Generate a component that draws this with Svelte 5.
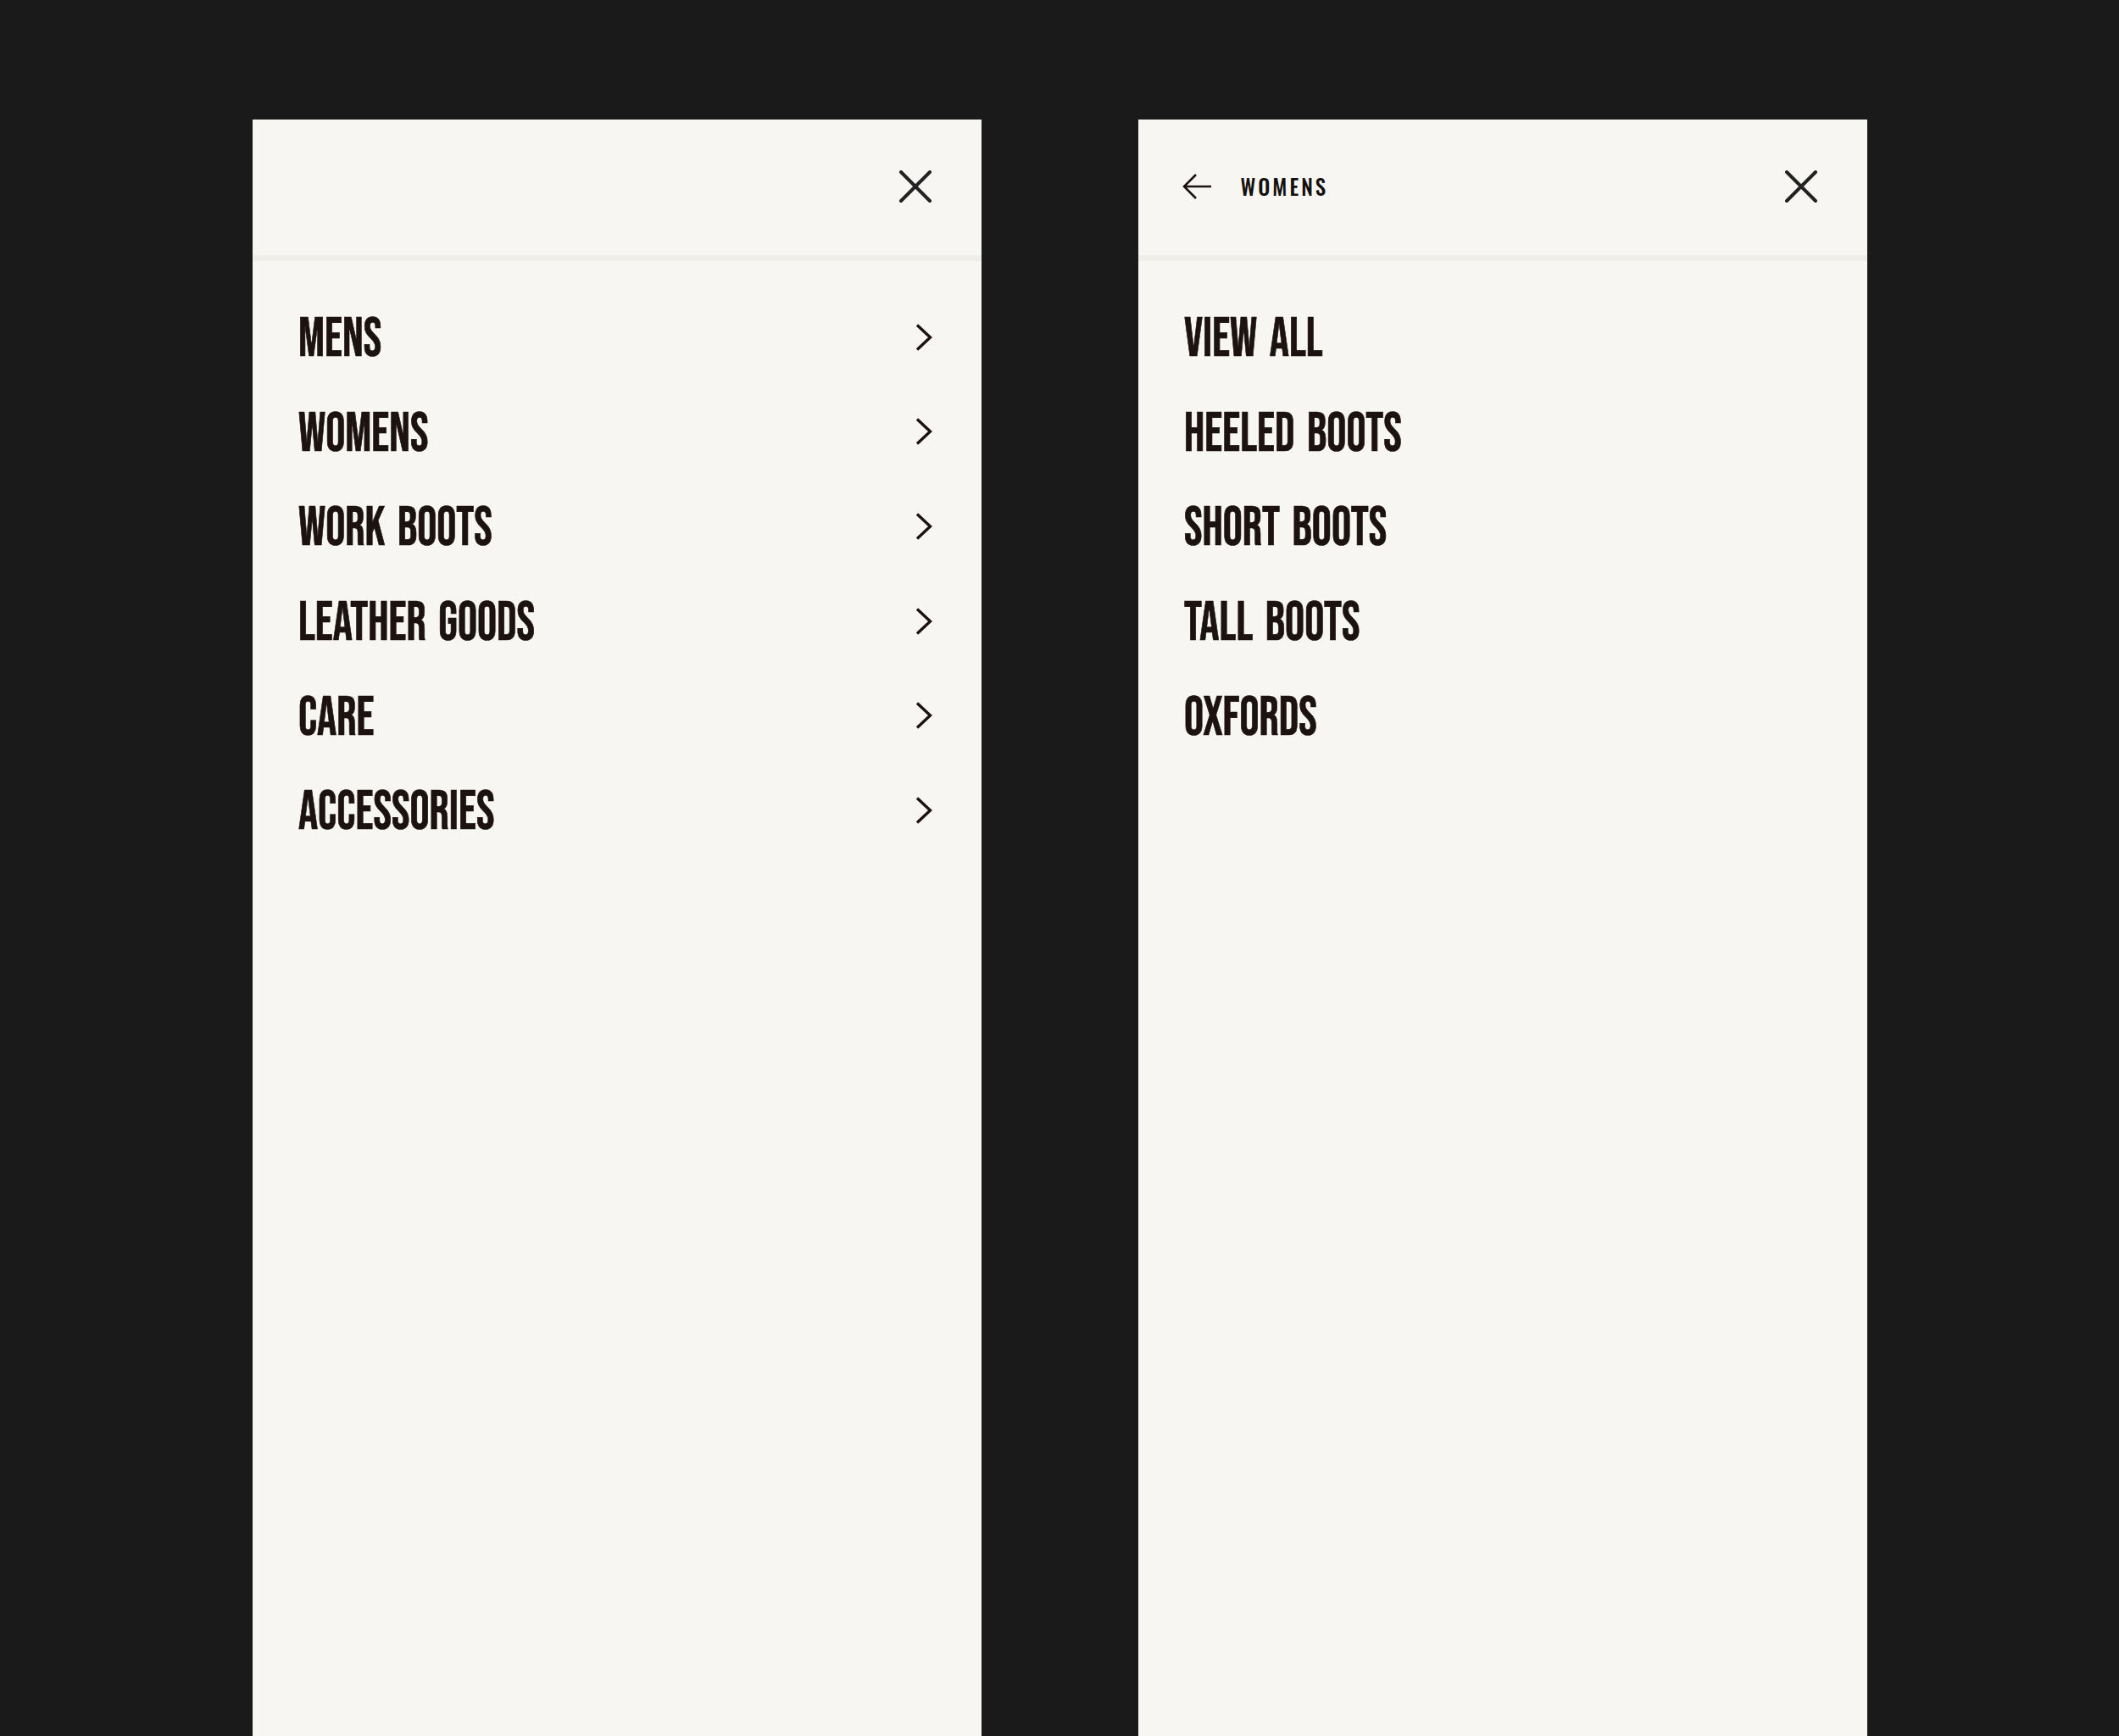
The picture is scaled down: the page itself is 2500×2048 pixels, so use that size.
<script>
  const main = ['MENS', 'WOMENS', 'WORK BOOTS', 'LEATHER GOODS', 'CARE', 'ACCESSORIES'];
  const sub = ['VIEW ALL', 'HEELED BOOTS', 'SHORT BOOTS', 'TALL BOOTS', 'OXFORDS'];
</script>

{#snippet close()}
  <svg class="close" viewBox="0 0 38 38" aria-hidden="true">
    <path d="M2 2 36 36M36 2 2 36" />
  </svg>
{/snippet}

<div class="stage">
  <section class="panel">
    <header class="head">
      {@render close()}
    </header>
    <ul class="list">
      {#each main as item}
        <li class="row">
          <span class="label">{item}</span>
          <svg class="chev" viewBox="0 0 20 32" aria-hidden="true"><path d="M2 1.5 17.5 16 2 30.5" /></svg>
        </li>
      {/each}
    </ul>
  </section>

  <section class="panel">
    <header class="head">
      <svg class="back" viewBox="0 0 34 30" aria-hidden="true"><path d="M16 1 2 15 16 29M2 15H34" /></svg>
      <span class="crumb">WOMENS</span>
      {@render close()}
    </header>
    <ul class="list">
      {#each sub as item}
        <li class="row"><span class="label">{item}</span></li>
      {/each}
    </ul>
  </section>
</div>

<style>
  :global(body) {
    margin: 0;
    background: #1a1a1a;
  }
  .stage {
    height: 2048px;
    box-sizing: border-box;
    padding-top: 141px;
    display: flex;
    justify-content: center;
    gap: 185px;
    overflow: hidden;
  }
  .panel {
    width: 860px;
    background: #f7f6f2;
    color: #1c1311;
  }
  .head {
    box-sizing: border-box;
    height: 167px;
    padding: 0 59px 3px 52px;
    border-bottom: 7px solid #efeee9;
    display: flex;
    align-items: center;
  }
  .close {
    width: 38px;
    height: 38px;
    margin-left: auto;
    fill: none;
    stroke: #222;
    stroke-width: 4;
    stroke-linecap: round;
  }
  .back {
    width: 34px;
    height: 30px;
    fill: none;
    stroke: #1c1311;
    stroke-width: 2.6;
  }
  .crumb {
    margin-left: 35px;
    font: 500 25px/1 "Oswald", "Liberation Sans", sans-serif;
    letter-spacing: 3px;
    color: #14100e;
  }
  .list {
    list-style: none;
    margin: 0;
    padding: 35px 58px 0 54px;
  }
  .row {
    height: 111.6px;
    display: flex;
    align-items: center;
    justify-content: space-between;
  }
  .label {
    display: inline-block;
    padding-top: 5px;
    font: 400 66px/1 "Bebas Neue", "Liberation Sans", sans-serif;
    word-spacing: 6px;
    -webkit-text-stroke: 0.7px #1c1311;
    white-space: nowrap;
    transform: scaleX(0.875);
    transform-origin: left center;
  }
  .chev {
    width: 20px;
    height: 32px;
    margin-top: -2px;
    fill: none;
    stroke: #1c1311;
    stroke-width: 3.4;
  }
</style>
